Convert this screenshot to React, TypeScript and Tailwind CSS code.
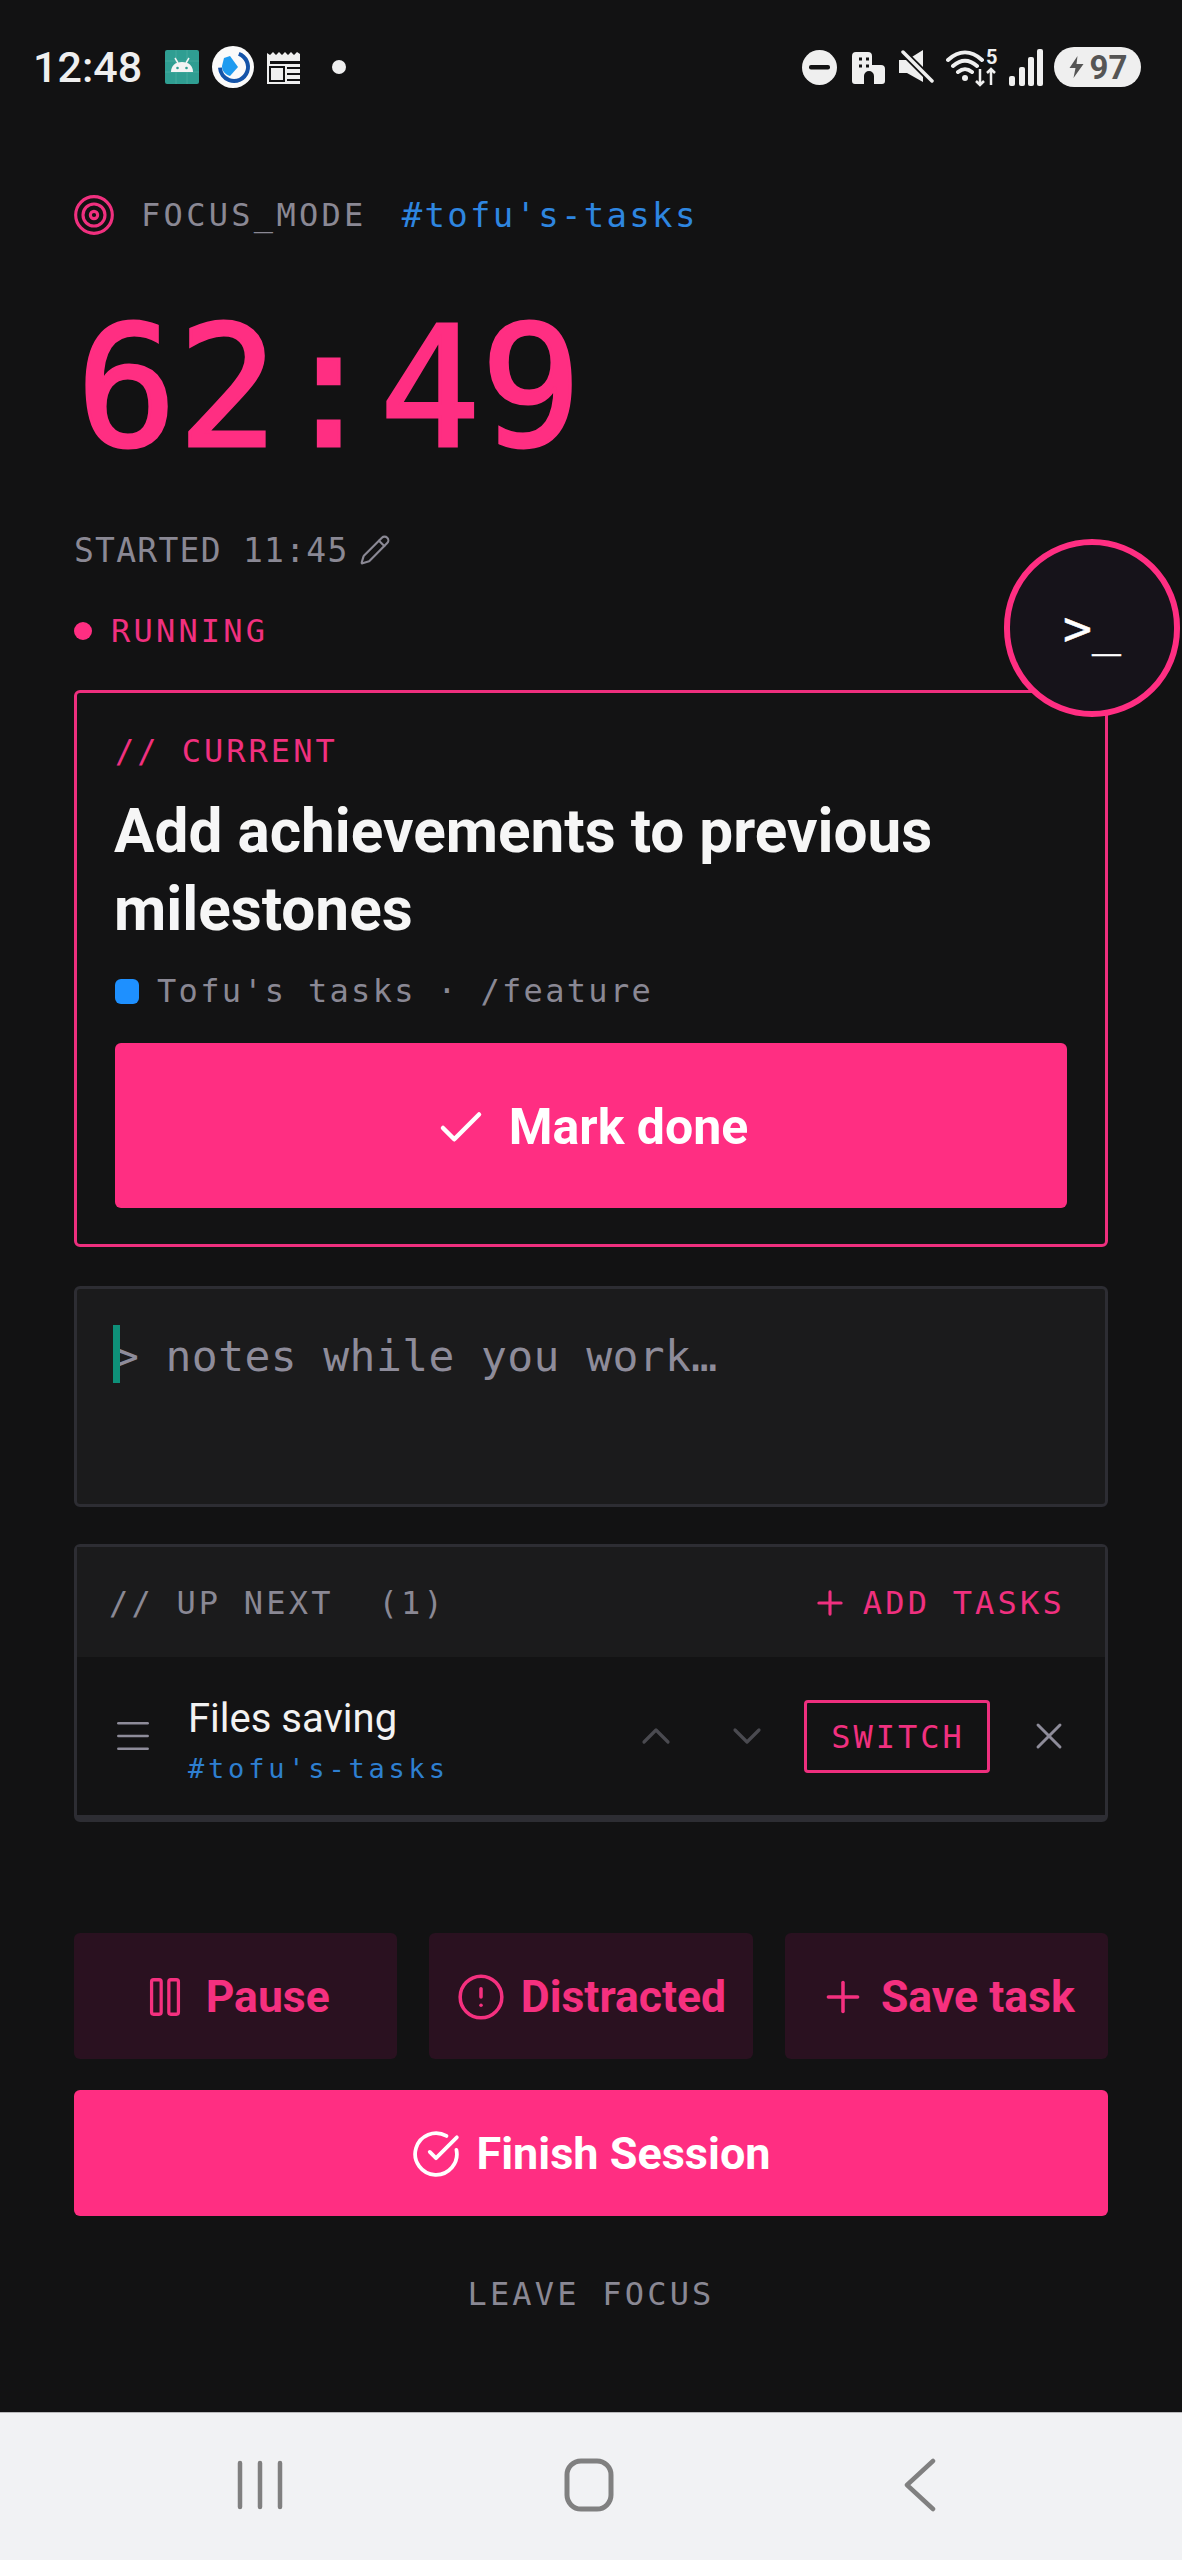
import React from "react";
import { Target, Pencil, Check, Plus, X, Pause, CircleAlert, CircleCheckBig, ChevronUp, ChevronDown, Menu } from "lucide-react";

const mono = "font-['DejaVu_Sans_Mono','Liberation_Mono',monospace]";

function StatusBar() {
  return (
    <div className="relative flex h-[134px] items-center justify-between pl-[33px] pr-[41px] text-[#efefef]">
      <div className="flex items-center">
        <span className="w-[132px] font-['Roboto',sans-serif] text-[43px] font-medium leading-none">12:48</span>
        <svg width="34" height="34" viewBox="0 0 34 34">
          <rect width="34" height="34" rx="2" fill="#2f9e92" />
          <path d="M0 11H34M0 22H34M11 0V34M22 0V34" stroke="#45a99d" strokeWidth="1" />
          <path d="M6 22c0-6 4-10 11-10s11 4 11 10z" fill="#f4f4f4" />
          <path d="M10 8l3 5M24 8l-3 5" stroke="#f4f4f4" strokeWidth="1.5" />
          <circle cx="12.5" cy="18" r="1.3" fill="#2f9e92" />
          <circle cx="21.5" cy="18" r="1.3" fill="#2f9e92" />
        </svg>
        <svg className="ml-[13px]" width="42" height="42" viewBox="0 0 42 42">
          <circle cx="21" cy="21" r="21" fill="#fafafa" />
          <circle cx="22" cy="21" r="14" fill="none" stroke="#1453a8" strokeWidth="4" strokeDasharray="60 28" transform="rotate(-70 22 21)" />
          <path d="M12 12l6-2 8 11-8 9c-6-2-8-6-8-10z" fill="#1e9bf0" />
        </svg>
        <svg className="ml-[13px]" width="36" height="33" viewBox="0 0 36 33">
          <path d="M0 2l3 2 3-3 3 3 3-3 3 3 3-3 3 3 3-3 3 3 3-3 3 2V33H0z" fill="#efefef" />
          <rect x="3" y="10" width="30" height="3" fill="#121213" />
          <rect x="3" y="16" width="14" height="14" fill="none" stroke="#121213" strokeWidth="2" />
          <path d="M20 17H33M20 23H33M20 29H33" stroke="#121213" strokeWidth="2" />
        </svg>
        <span className="ml-[29px] h-[14px] w-[14px] rounded-full bg-[#efefef]" />
      </div>
      <div className="flex items-center">
        <svg width="35" height="35" viewBox="0 0 35 35">
          <circle cx="17.5" cy="17.5" r="17.5" fill="#efefef" />
          <rect x="7" y="15" width="21" height="4.5" rx="2" fill="#121213" />
        </svg>
        <svg className="ml-[15px]" width="33" height="33" viewBox="0 0 33 33">
          <path d="M0 5a4 4 0 0 1 4-4h12a4 4 0 0 1 4 4v9h9a4 4 0 0 1 4 4v12a3 3 0 0 1-3 3H22V25a5 5 0 0 0-10 0v8H3a3 3 0 0 1-3-3z" fill="#efefef" />
          <path d="M7 8h3M14 8h3M7 15h3M14 15h3" stroke="#121213" strokeWidth="3" />
        </svg>
        <svg className="ml-[13px]" width="36" height="36" viewBox="0 0 36 36">
          <path d="M1 11h8L25 1v32L9 24H1z" fill="#efefef" />
          <path d="M3 1l31 31" stroke="#121213" strokeWidth="7" />
          <path d="M5 3l29 29" stroke="#efefef" strokeWidth="3.5" strokeLinecap="round" />
        </svg>
        <div className="relative ml-[12px] h-[40px] w-[52px]">
          <svg width="52" height="40" viewBox="0 0 52 40">
            <path d="M2 13c11-10 23-10 34 0M7 19c8-7 16-7 24 0M12 25c5-4 9-4 14 0" fill="none" stroke="#efefef" strokeWidth="4" strokeLinecap="round" />
            <circle cx="19" cy="31" r="3" fill="#efefef" />
            <path d="M34 22v16M30 34l4 4 4-4M45 38V22M41 26l4-4 4 4" fill="none" stroke="#efefef" strokeWidth="2.5" />
          </svg>
          <span className="absolute left-[40px] top-0 font-['Roboto',sans-serif] text-[20px] font-bold leading-[20px] text-[#efefef]">5</span>
        </div>
        <svg className="ml-[10px]" width="35" height="37" viewBox="0 0 35 37">
          <rect x="1" y="27" width="6" height="10" rx="2" fill="#efefef" />
          <rect x="11" y="18" width="6" height="19" rx="2" fill="#efefef" />
          <rect x="20" y="8" width="6" height="29" rx="2" fill="#efefef" />
          <rect x="29" y="0" width="6" height="37" rx="2" fill="#efefef" />
        </svg>
        <div className="ml-[11px] flex h-[40px] w-[87px] items-center justify-center gap-[5px] rounded-full bg-[#efefef] text-[#555]">
          <svg width="17" height="24" viewBox="0 0 16 24">
            <path d="M9 1L1 13h6l-2 10 10-14H8z" fill="#555" />
          </svg>
          <span className="font-['Roboto',sans-serif] text-[33px] font-bold leading-none">97</span>
        </div>
      </div>
    </div>
  );
}

function NavBar() {
  return (
    <div className="mt-auto flex h-[148px] items-center border-t border-[#b9b9bb] bg-[#f1f2f4] pb-[4px]">
      <div className="flex w-full items-center justify-between pl-[237px] pr-[246px]">
        <svg width="46" height="50" viewBox="0 0 46 50">
          <path d="M3 3v44M23 3v44M43 3v44" stroke="#808080" strokeWidth="4.5" strokeLinecap="round" />
        </svg>
        <svg className="-ml-[9px]" width="50" height="54" viewBox="0 0 50 54">
          <rect x="3" y="3" width="44" height="48" rx="14" fill="none" stroke="#808080" strokeWidth="5" />
        </svg>
        <svg width="32" height="54" viewBox="0 0 32 54">
          <path d="M29 3L3 27l26 24" fill="none" stroke="#808080" strokeWidth="4.5" strokeLinecap="round" strokeLinejoin="round" />
        </svg>
      </div>
    </div>
  );
}

function ActionButton({ icon, label }: { icon: React.ReactNode; label: string }) {
  return (
    <button className="flex h-[126px] items-center justify-center gap-[18px] rounded-[6px] bg-[#2a1120] pt-[2px] font-['Roboto',sans-serif] text-[44.5px] font-bold text-[#f5307f]">
      {icon}
      {label}
    </button>
  );
}

export default function App() {
  return (
    <div className="relative flex h-[2560px] w-[1182px] flex-col overflow-hidden bg-[#121213]">
      <StatusBar />
      <main className="px-[74px]">
        <div className={`mt-[63px] flex h-[36px] items-center ${mono}`}>
          <Target size={44} strokeWidth={1.7} className="-ml-[2px] text-[#f0307f]" />
          <span className="ml-[25px] text-[32px] leading-none tracking-[3.3px] text-[#8a8894]">FOCUS_MODE</span>
          <span className="ml-[35px] text-[34px] leading-none tracking-[2.3px] text-[#2e86e0]">#tofu's-tasks</span>
        </div>

        <div className={`mt-[71px] h-[168px] pl-[2px] text-[168px] leading-[168px] text-[#ff2e82] [-webkit-text-stroke:3px_#ff2e82] ${mono}`}>62:49</div>

        <div className={`mt-[58px] flex h-[40px] items-center text-[33px] leading-none tracking-[1.25px] text-[#8a8894] ${mono}`}>
          STARTED 11:45
          <Pencil size={32} strokeWidth={1.6} className="ml-[10px]" />
        </div>

        <div className={`mt-[41px] flex h-[40px] items-center text-[32px] leading-none tracking-[3.2px] text-[#f0307f] ${mono}`}>
          <span className="mr-[19px] h-[18px] w-[18px] rounded-full bg-[#ff2e82]" />
          RUNNING
        </div>

        <section className="mt-[39px] h-[557px] rounded-[6px] border-[3px] border-[#ee2f7e] bg-[#131314] px-[38px] pt-[38px]">
          <div className={`h-[40px] text-[32px] leading-[40px] tracking-[3px] text-[#f0307f] ${mono}`}>// CURRENT</div>
          <h1 className="-ml-[1px] mt-[22px] font-['Roboto',sans-serif] text-[60.3px] font-bold leading-[78px] text-[#f6f6f6]">
            Add achievements to previous milestones
          </h1>
          <div className={`mt-[22px] flex h-[40px] items-center text-[32px] leading-none tracking-[2.3px] text-[#8a8894] ${mono}`}>
            <span className="mr-[18px] h-[25px] w-[24px] rounded-[6px] bg-[#1e90ff]" />
            Tofu's tasks · /feature
          </div>
          <button className="mt-[32px] flex h-[165px] w-full items-center justify-center gap-[21px] rounded-[6px] bg-[#ff2e82] pt-[4px] font-['Roboto',sans-serif] text-[50px] font-bold text-white">
            <Check size={54} strokeWidth={2} />
            Mark done
          </button>
        </section>

        <div className="relative mt-[39px] h-[221px] rounded-[6px] border-[3px] border-[#2d2d33] bg-[#1b1b1c] pl-[36px] pr-[38px] pt-[42px]">
          <span className="absolute left-[36px] top-[36px] h-[58px] w-[7px] bg-[#0e9079]" />
          <span className={`text-[43px] leading-[50px] tracking-[0.4px] text-[#8e8c9a] ${mono}`}>&gt; notes while you work…</span>
        </div>

        <section className="mt-[37px] h-[278px] rounded-[6px] border-[3px] border-[#2d2d33]">
          <div className={`flex h-[110px] items-center justify-between bg-[#1b1b1c] pl-[32px] pr-[40px] pt-[2px] text-[32px] leading-none tracking-[3.2px] ${mono}`}>
            <span className="whitespace-pre text-[#8a8894]">// UP NEXT  (1)</span>
            <span className="flex items-center text-[#f0307f]">
              <Plus size={38} strokeWidth={2} className="mr-[14px]" />
              ADD TASKS
            </span>
          </div>
          <div className="flex h-[162px] items-center border-b-[4px] border-[#2d2d33] bg-[#131314] pl-[34px] pr-[34px]">
            <Menu size={44} strokeWidth={1.4} className="text-[#8e8c9a]" />
            <div className="ml-[33px] mt-[13px] flex-1">
              <div className="font-['Roboto',sans-serif] text-[40px] leading-[50px] text-[#f2f2f2]">Files saving</div>
              <div className={`mt-[3px] text-[27px] leading-[44px] tracking-[3.8px] text-[#2e7fd0] ${mono}`}>#tofu's-tasks</div>
            </div>
            <ChevronUp size={48} strokeWidth={1.6} className="text-[#4a4a50]" />
            <ChevronDown size={48} strokeWidth={1.6} className="ml-[43px] text-[#4a4a50]" />
            <button className={`ml-[33px] mt-[1px] flex h-[73px] w-[186px] items-center justify-center rounded-[4px] border-[3px] border-[#ee2f7e] pl-[2px] text-[32px] leading-none tracking-[3px] text-[#f0307f] ${mono}`}>
              SWITCH
            </button>
            <X size={44} strokeWidth={1.6} className="ml-[37px] text-[#8e8c9a]" />
          </div>
        </section>

        <div className="mt-[111px] grid grid-cols-3 gap-[32px]">
          <ActionButton icon={<Pause size={46} strokeWidth={1.7} />} label="Pause" />
          <ActionButton icon={<CircleAlert size={50} strokeWidth={1.7} className="-mr-[3px]" />} label="Distracted" />
          <ActionButton icon={<Plus size={50} strokeWidth={1.7} className="-mr-[5px]" />} label="Save task" />
        </div>

        <button className="mt-[31px] flex h-[126px] w-full items-center justify-center gap-[15px] rounded-[6px] bg-[#ff2e82] pt-[2px] font-['Roboto',sans-serif] text-[45px] font-bold text-white">
          <CircleCheckBig size={50} strokeWidth={1.8} />
          Finish Session
        </button>

        <div className={`mt-[58px] h-[40px] text-center text-[32px] leading-[40px] tracking-[3.2px] text-[#8a8894] ${mono}`}>LEAVE FOCUS</div>
      </main>
      <NavBar />

      <button className={`absolute left-[1004px] top-[539px] flex h-[178px] w-[176px] items-center justify-center rounded-full border-[6px] border-[#ff2e82] bg-[#16131a] text-[48px] leading-none text-white [-webkit-text-stroke:0.5px_#ffffff] ${mono}`}>
        &gt;_
      </button>
    </div>
  );
}
